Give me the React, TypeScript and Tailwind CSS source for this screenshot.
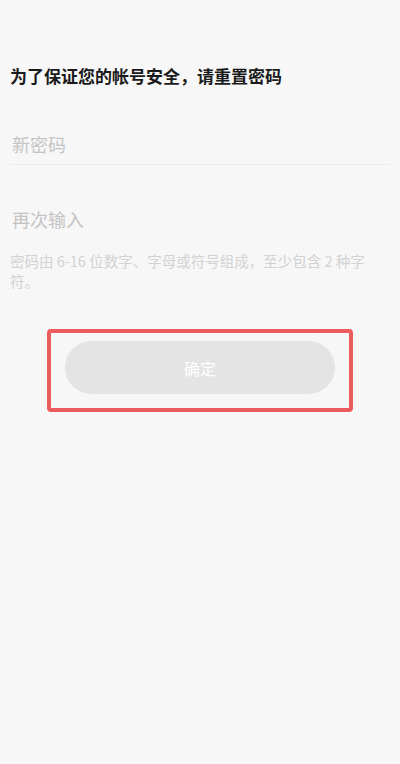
import React from "react";

export default function App() {
  const font = { fontFamily: '"Noto Sans CJK SC", "Noto Sans", sans-serif' };
  return (
    <div className="min-h-[764px] w-[400px] bg-[#f7f7f7] px-[10px]" style={font}>
      <div className="pt-[64px] text-[17px] leading-[24px] font-bold text-[#1a1a1a]">
        为了保证您的帐号安全，请重置密码
      </div>
      <div className="mt-[37px] flex h-[40px] items-center border-b border-[#ececec] pl-[2px] text-[18px] text-[#c4c4c4]">
        新密码
      </div>
      <div className="mt-[34px] flex h-[40px] items-center pl-[2px] text-[18px] text-[#c4c4c4]">
        再次输入
      </div>
      <div className="mt-[12px] w-[372px] text-[14.5px] leading-[20px] text-[#d2d2d2]">
        密码由 6-16 位数字、字母或符号组成，至少包含 2 种字符。
      </div>
      <div className="ml-[37px] mt-[38px] h-[83px] w-[306px] rounded-[4px] border-[4px] border-[#ec5b5e] pl-[14px] pr-[14px] pt-[8px]">
        <div className="flex h-[53px] items-center justify-center rounded-full bg-[#e4e4e4] text-[16px] text-white">
          确定
        </div>
      </div>
    </div>
  );
}
